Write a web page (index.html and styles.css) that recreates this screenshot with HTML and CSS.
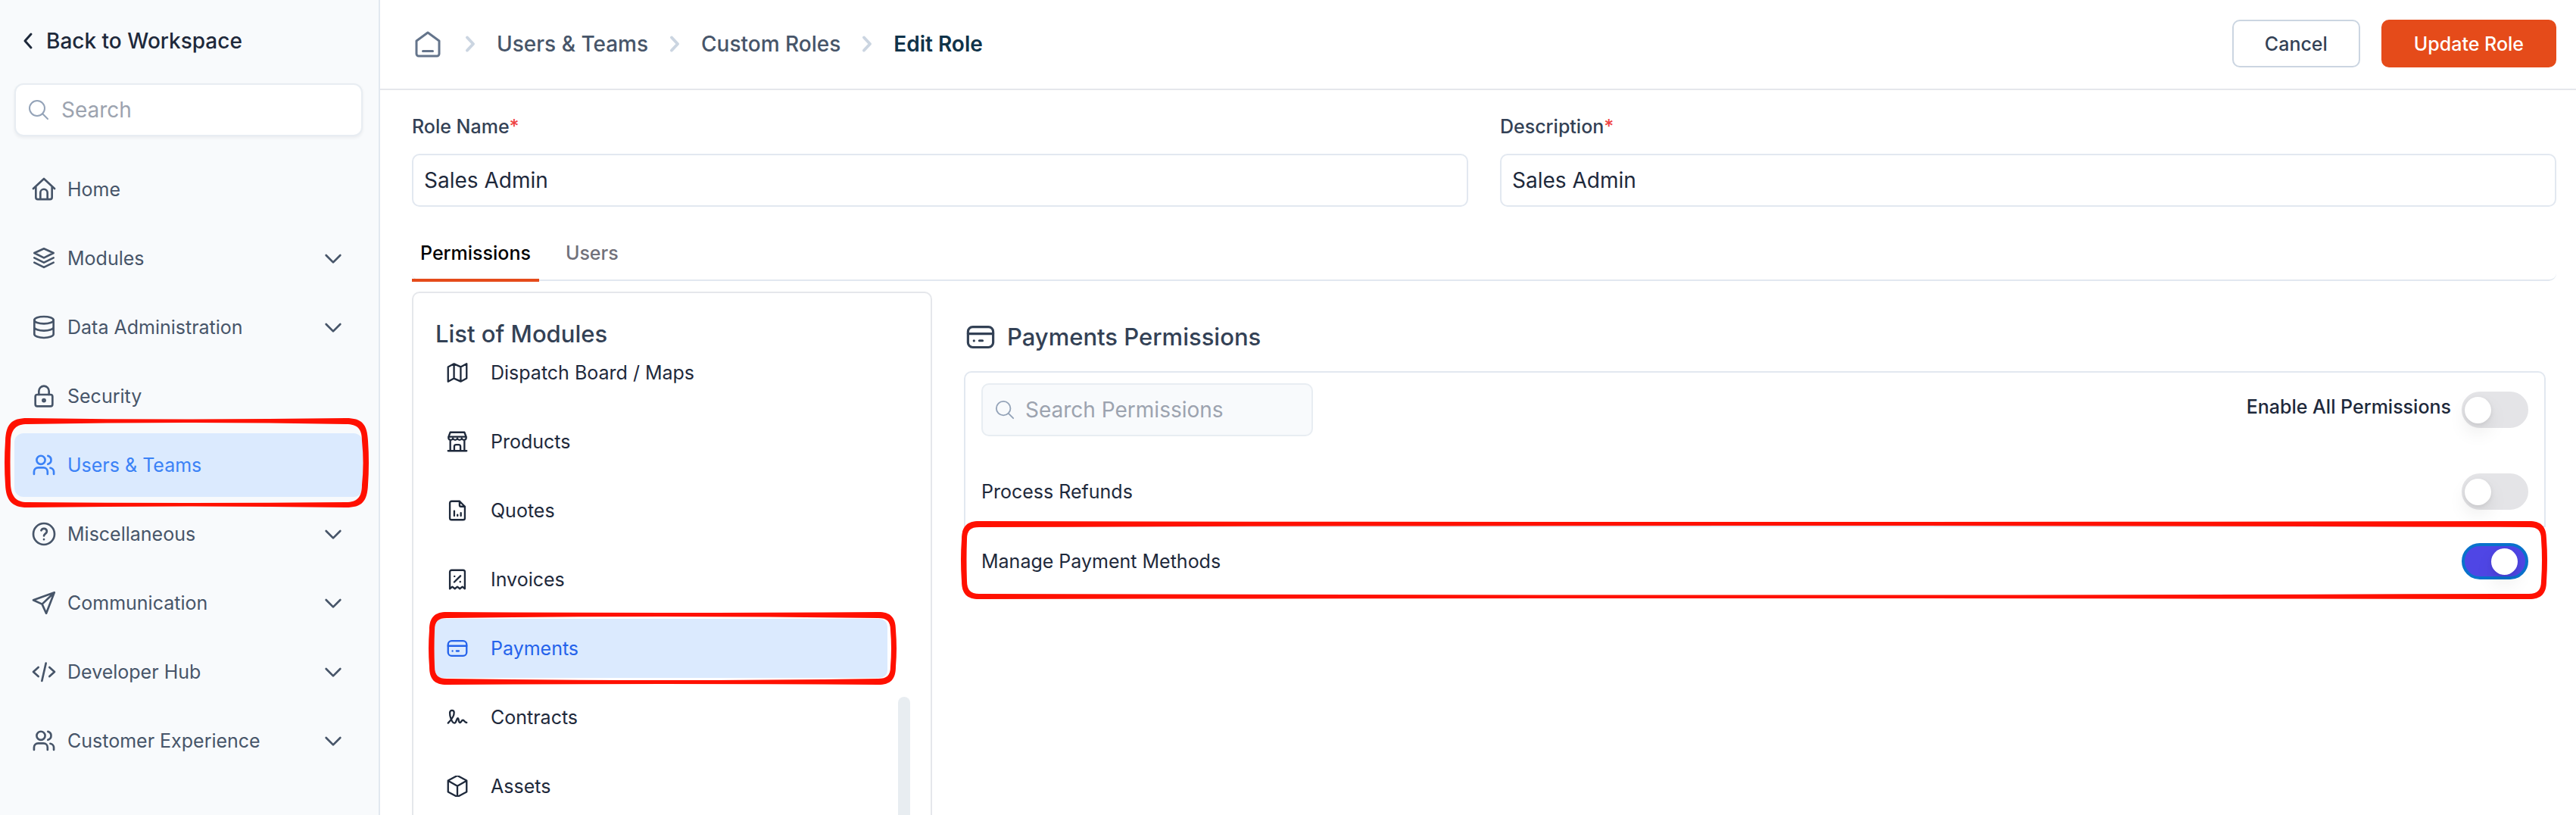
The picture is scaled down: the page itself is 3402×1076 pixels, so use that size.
FILE: index.html
```html
<!DOCTYPE html>
<html lang="en">
<head>
<meta charset="utf-8">
<meta name="viewport" content="width=device-width, initial-scale=1">
<title>Edit Role</title>
<link rel="stylesheet" href="styles.css">
</head>
<body>
<svg class="sprite" aria-hidden="true">
  <symbol id="chevron-down" viewBox="0 0 24 24"><path d="M5 9l7 7 7-7"/></symbol>
  <symbol id="crumb-arrow" viewBox="0 0 14 24"><path d="M3 3.500l8 8.500-8 8.500"/></symbol>
  <symbol id="search" viewBox="0 0 28 28"><circle cx="12" cy="12" r="10"/><path d="M19 19l7 7"/></symbol>
  <symbol id="users" viewBox="0 0 24 24"><circle cx="9" cy="7" r="4.2"/><path d="M2.2 21v-2.500a4 4 0 0 1 4-4h5.400a4 4 0 0 1 4 4V21M16 2.900a4.250 4.250 0 0 1 0 8.200M18.300 14.800a4 4 0 0 1 3.500 4V21"/></symbol>
  <symbol id="card" viewBox="0 0 24 24"><rect x="1.500" y="3.500" width="21" height="17" rx="4"/><path d="M1.500 9.200h21M6.500 15v.1M11 15h2.600"/></symbol>
</svg>
<div class="app">
  <aside class="sidebar">
    <a class="back" href="#"><svg class="back-icon" viewBox="0 0 14 24"><path d="M11 3l-8 9 8 9"/></svg>Back to Workspace</a>
    <div class="search-box">
      <svg class="search-icon"><use href="#search"/></svg>
      <input type="search" aria-label="Search" placeholder="Search">
    </div>
    <nav class="nav">
      <a class="nav-item" href="#"><svg viewBox="0 0 24 24"><path d="M1.500 11.300L12 1.500l10.500 9.800M4 9.500v10.300a2 2 0 0 0 2 2h12a2 2 0 0 0 2-2V9.500M8.500 21.500v-6.200a3.500 3.500 0 0 1 7 0v6.200"/></svg><span>Home</span></a>
      <a class="nav-item" href="#"><svg viewBox="0 0 24 24"><path d="M12 2.500l9.500 4.300L12 11.500 2.500 6.800zM2.500 11.500l9.500 4.700 9.500-4.700M2.500 16.200l9.500 4.700 9.500-4.700"/></svg><span>Modules</span><svg class="caret"><use href="#chevron-down"/></svg></a>
      <a class="nav-item" href="#"><svg viewBox="0 0 24 24"><ellipse cx="12" cy="5" rx="9.500" ry="3.500"/><path d="M2.500 5v14c0 1.900 4.300 3.500 9.500 3.500s9.500-1.600 9.500-3.500V5M2.500 12c0 1.900 4.300 3.500 9.500 3.500s9.500-1.600 9.500-3.500"/></svg><span>Data Administration</span><svg class="caret"><use href="#chevron-down"/></svg></a>
      <a class="nav-item" href="#"><svg viewBox="0 0 24 24"><rect x="3.500" y="10.500" width="17" height="11.500" rx="2"/><path d="M7 10.500V7a5 5 0 0 1 10 0v3.500"/><circle cx="12" cy="16.200" r="1.200"/></svg><span>Security</span></a>
      <a class="nav-item is-active" href="#" aria-current="page"><svg><use href="#users"/></svg><span>Users &amp; Teams</span>
        <svg class="mark mark-nav" viewBox="0 0 481 118" preserveAspectRatio="none"><path fill-rule="evenodd" d="M30 0Q240 3 451 0C472 0 479 8 480 30Q482 59 480 88C479 110 472 118 451 118Q240 115 30 118C9 118 2 108 1 88Q-1 59 1 30C2 8 9 0 30 0ZM30 8Q240 4 451 8C466 8 472 14 472 30Q475 59 472 88C472 104 466 111 451 111Q240 113 30 111C15 111 9 103 8 88Q7 59 8 30C9 15 15 8 30 8Z"/></svg></a>
      <a class="nav-item" href="#"><svg viewBox="0 0 24 24"><circle cx="12" cy="12" r="10.500"/><path d="M9.300 8.500a2.900 2.900 0 0 1 5.600 1c0 2-2.800 2.400-2.900 4.300M12 17.300v.1"/></svg><span>Miscellaneous</span><svg class="caret"><use href="#chevron-down"/></svg></a>
      <a class="nav-item" href="#"><svg viewBox="0 0 24 24"><path d="M22.300 1.700L1.500 9.200l8.700 4L14.300 22.300zM22.300 1.700L10.200 13.200"/></svg><span>Communication</span><svg class="caret"><use href="#chevron-down"/></svg></a>
      <a class="nav-item" href="#"><svg viewBox="0 0 24 24"><path d="M6.500 7.500L1.500 12l5 4.500M17.500 7.500l5 4.500-5 4.500M14 3.500l-4 17.500"/></svg><span>Developer Hub</span><svg class="caret"><use href="#chevron-down"/></svg></a>
      <a class="nav-item" href="#"><svg><use href="#users"/></svg><span>Customer Experience</span><svg class="caret"><use href="#chevron-down"/></svg></a>
    </nav>
  </aside>

  <main class="main">
    <header class="topbar">
      <nav class="crumbs" aria-label="Breadcrumb">
        <a class="crumb-home" href="#" aria-label="Home"><svg viewBox="0 0 36 38"><path d="M18 4L33 15v17a3 3 0 0 1-3 3H6a3 3 0 0 1-3-3V15zM11.500 28.500h13"/></svg></a>
        <svg class="crumb-arrow"><use href="#crumb-arrow"/></svg>
        <a href="#">Users &amp; Teams</a>
        <svg class="crumb-arrow"><use href="#crumb-arrow"/></svg>
        <a href="#">Custom Roles</a>
        <svg class="crumb-arrow"><use href="#crumb-arrow"/></svg>
        <span class="crumb-current" aria-current="page">Edit Role</span>
      </nav>
      <div class="actions">
        <button class="btn" type="button">Cancel</button>
        <button class="btn btn-primary" type="submit">Update Role</button>
      </div>
    </header>

    <div class="content">
      <form class="fields">
        <div class="field"><label for="role-name">Role Name<em>*</em></label><input id="role-name" type="text" value="Sales Admin"></div>
        <div class="field"><label for="role-desc">Description<em>*</em></label><input id="role-desc" type="text" value="Sales Admin"></div>
      </form>

      <div class="tabs" role="tablist">
        <button class="tab is-active" type="button" role="tab" aria-selected="true">Permissions</button>
        <button class="tab" type="button" role="tab" aria-selected="false">Users</button>
      </div>

      <div class="columns">
        <section class="modules">
          <h2>List of Modules</h2>
          <div class="module-scroll">
            <div class="module-list">
              <a class="module" href="#"><svg viewBox="0 0 24 24"><path d="M1.500 5.500l6.700-3.500 7.600 3.500L22.500 2v16.500L15.800 22l-7.600-3.500L1.500 22zM8.200 2v16.500M15.800 5.500V22"/></svg><span>Dispatch Board / Maps</span></a>
              <a class="module" href="#"><svg viewBox="0 0 24 24"><path d="M4 1.500h16l2 5.200v1.300a2.600 2.600 0 0 1-5 .5 2.700 2.700 0 0 1-5 0 2.700 2.700 0 0 1-5 0 2.600 2.600 0 0 1-5-.5V6.700zM2 6.500h20M4 11v11M20 11v11M1.500 22.500h21M8.500 22v-4.500a2 2 0 0 1 2-2h3a2 2 0 0 1 2 2V22"/></svg><span>Products</span></a>
              <a class="module" href="#"><svg viewBox="0 0 24 24"><path d="M14.500 1.500H5.500a2 2 0 0 0-2 2v17a2 2 0 0 0 2 2h13a2 2 0 0 0 2-2V7.500zM14.500 1.500v4.500a1.500 1.500 0 0 0 1.500 1.500h4.500M8.500 12.500v5.500M12.200 16.800V18M16 14.800V18"/></svg><span>Quotes</span></a>
              <a class="module" href="#"><svg viewBox="0 0 24 24"><path d="M3.500 22.500V3.500a2 2 0 0 1 2-2h13a2 2 0 0 1 2 2v19l-2.830-2.200-2.840 2.200-2.830-2.200-2.830 2.200-2.840-2.200zM15.500 8l-7 7M8.800 8.400v.1M15.200 14.600v.1"/></svg><span>Invoices</span></a>
              <a class="module is-active" href="#" aria-current="true"><svg><use href="#card"/></svg><span>Payments</span>
                <svg class="mark mark-module" viewBox="0 0 617 96" preserveAspectRatio="none"><path fill-rule="evenodd" d="M24 0Q308 2 593 0C609 0 616 7 616 24Q618 48 616 72C616 89 609 96 593 96Q308 94 24 96C8 96 1 89 1 72Q-1 48 1 24C1 7 8 0 24 0ZM24 8Q308 4 593 8C604 8 609 12 609 24Q611 48 609 72C609 84 604 88 593 88Q308 92 24 88C13 88 8 84 8 72Q7 48 8 24C8 12 13 8 24 8Z"/></svg></a>
              <a class="module" href="#"><svg viewBox="0 0 24 24"><path d="M1.500 18.500C5 15 8.500 10 8.300 6.500 8.100 3.500 3.700 3.300 3.500 7c-.2 4 2.300 11.500 5.200 11.500 2.300 0 2.300-5.500 3.800-5.500s.5 5 2.300 5 1.700-2.800 3.500-2.800 1.700 2.800 4.200 2.800"/></svg><span>Contracts</span></a>
              <a class="module" href="#"><svg viewBox="0 0 24 24"><path d="M12 0L22.500 5.500v13L12 24 1.500 18.500v-13zM1.500 5.800L12 11.800l10.500-6M12 11.800V24"/></svg><span>Assets</span></a>
            </div>
            <div class="scroll-track"><div class="scroll-thumb"></div></div>
          </div>
        </section>

        <section class="permissions">
          <h2><svg><use href="#card"/></svg>Payments Permissions</h2>
          <div class="panel">
            <div class="panel-head">
              <div class="search-box search-box-muted">
                <svg class="search-icon"><use href="#search"/></svg>
                <input type="search" aria-label="Search Permissions" placeholder="Search Permissions">
              </div>
              <label class="enable-all"><span>Enable All Permissions</span><input class="toggle" type="checkbox"></label>
            </div>
            <label class="row"><span>Process Refunds</span><input class="toggle" type="checkbox"></label>
          </div>
          <label class="row row-marked"><span>Manage Payment Methods</span><input class="toggle" type="checkbox" checked>
            <svg class="mark mark-row" viewBox="0 0 2095 103" preserveAspectRatio="none"><path fill-rule="evenodd" d="M24 0Q1047 2 2071 0C2087 0 2094 7 2094 24Q2096 51 2094 79C2094 96 2087 103 2071 103Q1047 101 24 103C8 103 1 96 1 79Q-1 51 1 24C1 7 8 0 24 0ZM24 8Q1047 4 2071 8C2082 8 2087 12 2087 24Q2089 51 2087 79C2087 91 2082 96 2071 96Q1047 99 24 96C13 96 8 91 8 79Q7 51 8 24C8 12 13 8 24 8Z"/></svg></label>
        </section>
      </div>
    </div>
  </main>
</div>
</body>
</html>
```
FILE: styles.css
```css
* { box-sizing: border-box; }

body {
  margin: 0;
  font-family: Inter, "Liberation Sans", sans-serif;
  font-size: 25px;
  line-height: 32px;
  color: #1e293b;
  background: #fff;
}

a { color: inherit; text-decoration: none; }
h2 { margin: 0; font-size: 31px; line-height: 40px; font-weight: 500; color: #334155; }
input, button { font: inherit; }
svg { flex: none; fill: none; stroke: currentColor; stroke-width: 2; stroke-linecap: round; stroke-linejoin: round; }
.sprite { position: absolute; width: 0; height: 0; }

.app { display: flex; height: 100vh; overflow: hidden; }

/* Sidebar */
.sidebar {
  flex: none;
  width: 502px;
  padding: 34px 21px 0 19px;
  background: #f8fafc;
  border-right: 2px solid #e2e8f0;
}
.back {
  display: flex;
  align-items: center;
  gap: 16px;
  height: 40px;
  padding-left: 10px;
  font-size: 28px;
  font-weight: 500;
}
.back-icon { width: 16px; height: 24px; stroke-width: 3; }

.search-box {
  display: flex;
  align-items: center;
  gap: 16px;
  height: 70px;
  padding: 0 18px 0 16px;
  border: 2px solid #e8edf2;
  border-radius: 12px;
  background: #fff;
}
.sidebar .search-box { margin-top: 36px; box-shadow: 0 2px 4px rgba(15, 23, 42, .06); }
.search-box input {
  flex: 1;
  min-width: 0;
  padding: 0;
  border: 0;
  outline: 0;
  background: none;
  font-size: 28px;
}
.search-box input::placeholder { color: #9ca3af; }
.search-icon { width: 28px; height: 28px; color: #94a3b8; }

.nav { display: flex; flex-direction: column; gap: 7px; margin-top: 28px; color: #475569; }
.nav-item {
  position: relative;
  display: flex;
  align-items: center;
  gap: 15px;
  height: 84px;
  padding: 0 23px;
  border-radius: 12px;
}
.nav-item > svg:first-child { width: 32px; height: 32px; }
.nav-item span { flex: 1; }
.nav-item .caret { width: 32px; height: 32px; }
.nav-item.is-active { background: #dbeafe; color: #3b82f6; }

/* Hand-drawn outlines over the highlighted items */
.mark { position: absolute; fill: #ff1000; stroke: none; pointer-events: none; }
.mark-nav { left: -13px; top: -20px; width: calc(100% + 21px); height: 118px; }
.mark-module { left: -7px; top: -9px; width: calc(100% + 19px); height: 96px; }
.mark-row { left: -4px; top: -3px; width: calc(100% + 6px); height: 103px; }

/* Top bar */
.main { flex: 1; min-width: 0; display: flex; flex-direction: column; }
.topbar {
  flex: none;
  display: flex;
  align-items: center;
  justify-content: space-between;
  height: 119px;
  padding: 0 26px 2px 45px;
  border-bottom: 2px solid #e5e7eb;
}
.crumbs { display: flex; align-items: center; gap: 28px; font-size: 28px; font-weight: 500; color: #475569; }
.crumb-home { display: flex; margin-right: 3px; color: #64748b; }
.crumb-home svg { width: 36px; height: 38px; stroke-width: 3; }
.crumb-arrow { width: 14px; height: 24px; stroke-width: 4; color: #cbd5e1; }
.crumb-current { font-weight: 600; color: #0f3349; }
.actions { display: flex; gap: 28px; }
.btn {
  height: 63px;
  padding: 0 41px;
  border: 2px solid #cbd5e1;
  border-radius: 10px;
  background: #fff;
  font-weight: 500;
  color: #334155;
}
.btn-primary { border-color: #e54b1a; background: #e54b1a; color: #fff; }

/* Role fields */
.content { flex: 1; min-height: 0; display: flex; flex-direction: column; padding: 32px 26px 0 42px; }
.fields { display: grid; grid-template-columns: 1fr 1fr; gap: 42px; }
.field { display: flex; flex-direction: column; gap: 20px; }
.field label { font-weight: 500; color: #334155; }
.field em { font-style: normal; color: #ef4444; }
.field input {
  height: 70px;
  padding: 0 14px;
  border: 2px solid #e2e8f0;
  border-radius: 10px;
  background: #fff;
  font-size: 28px;
  color: #1e293b;
}

.tabs {
  flex: none;
  display: flex;
  gap: 24px;
  height: 98px;
  border-bottom: 2px solid #e2e8f0;
  border-radius: 0 0 10px 10px;
  margin-bottom: 14px;
}
.tab {
  height: 99px;
  padding: 26px 11px 0;
  border: 0;
  border-bottom: 4px solid transparent;
  background: none;
  font-weight: 500;
  color: #71717a;
}
.tab.is-active { border-color: #e54b1a; color: #000; }

/* Modules */
.columns { flex: 1; min-height: 0; display: flex; gap: 42px; }
.modules {
  flex: none;
  display: flex;
  flex-direction: column;
  width: 687px;
  padding: 34px 27px 0;
  border: 2px solid #e5e7eb;
  border-bottom: 0;
  border-radius: 10px 10px 0 0;
}
.modules h2 { flex: none; height: 32px; padding-left: 2px; }
.module-scroll { display: flex; gap: 14px; flex: 1; min-height: 0; }
.module-list { flex: 1; display: flex; flex-direction: column; gap: 13px; }
.module {
  position: relative;
  flex: none;
  display: flex;
  align-items: center;
  gap: 30px;
  height: 78px;
  padding: 0 17px;
  border-radius: 10px;
}
.module > svg:first-child { width: 28px; height: 28px; }
.module.is-active { background: #dbeafe; color: #2563eb; }
.scroll-track { width: 16px; padding-top: 467px; display: flex; }
.scroll-thumb { flex: 1; border-radius: 8px 8px 0 0; background: #e8edf1; }

/* Permissions */
.permissions { flex: 1; min-width: 0; padding: 40px 14px 0 0; }
.permissions h2 { display: flex; align-items: center; gap: 16px; padding-left: 3px; }
.permissions h2 svg { width: 38px; height: 38px; }
.panel {
  margin-top: 25px;
  height: 206px;
  border: 2px solid #e2e8f0;
  border-radius: 10px 10px 0 0;
}
.panel-head { display: flex; align-items: center; justify-content: space-between; padding: 14px 21px 0; }
.search-box-muted { width: 438px; gap: 14px; border-radius: 10px; background: #f8fafc; }
.search-box-muted .search-icon { width: 26px; height: 26px; }
.enable-all { display: flex; align-items: flex-start; gap: 14px; line-height: 40px; font-weight: 500; }
.row { position: relative; display: flex; align-items: center; justify-content: space-between; padding: 0 21px; }
.panel .row { margin-top: 49px; }
.row-marked { height: 100px; padding: 0 23px; margin-top: -5px; }

.toggle {
  appearance: none;
  flex: none;
  width: 88px;
  height: 48px;
  margin: 0;
  border: 4px solid #e4e4e7;
  border-radius: 24px;
  background: #e4e4e7;
  display: flex;
  align-items: center;
}
.toggle::before {
  content: "";
  width: 35px;
  height: 35px;
  border-radius: 50%;
  background: #fff;
  box-shadow: 0 12px 24px rgba(0, 0, 0, .08), 0 2px 6px rgba(0, 0, 0, .08);
}
.toggle:checked { border-color: #0972cc; background: #4f46e5; }
.toggle:checked::before { margin-left: 35px; }
```
